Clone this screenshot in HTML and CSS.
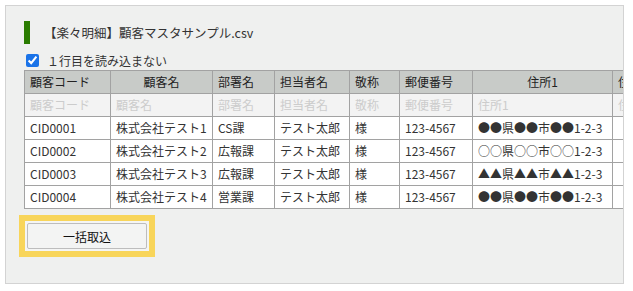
FILE: index.html
```html
<!DOCTYPE html>
<html lang="ja">
<head>
<meta charset="utf-8">
<link rel="stylesheet" href="styles.css">
</head>
<body>
<div class="panel">
  <div class="title">【楽々明細】顧客マスタサンプル.csv</div>
  <label class="skip"><input type="checkbox" checked><span>１行目を読み込まない</span></label>
  <div class="scroll">
    <table class="grid">
      <colgroup>
        <col class="c1"><col class="c2"><col class="c3"><col class="c4"><col class="c5"><col class="c6"><col class="c7"><col class="c8">
      </colgroup>
      <thead>
        <tr class="head">
          <th>顧客コード</th><th class="ctr">顧客名</th><th>部署名</th><th>担当者名</th><th>敬称</th><th>郵便番号</th><th class="ctr">住所1</th><th>住所2</th>
        </tr>
        <tr class="ph">
          <td>顧客コード</td><td>顧客名</td><td>部署名</td><td>担当者名</td><td>敬称</td><td>郵便番号</td><td>住所1</td><td>住所2</td>
        </tr>
      </thead>
      <tbody>
        <tr><td>CID0001</td><td>株式会社テスト1</td><td>CS課</td><td>テスト太郎</td><td>様</td><td>123-4567</td><td>●●県●●市●●1-2-3</td><td></td></tr>
        <tr><td>CID0002</td><td>株式会社テスト2</td><td>広報課</td><td>テスト太郎</td><td>様</td><td>123-4567</td><td>○○県○○市○○1-2-3</td><td></td></tr>
        <tr><td>CID0003</td><td>株式会社テスト3</td><td>広報課</td><td>テスト太郎</td><td>様</td><td>123-4567</td><td>▲▲県▲▲市▲▲1-2-3</td><td></td></tr>
        <tr><td>CID0004</td><td>株式会社テスト4</td><td>営業課</td><td>テスト太郎</td><td>様</td><td>123-4567</td><td>●●県●●市●●1-2-3</td><td></td></tr>
      </tbody>
    </table>
  </div>
  <div class="hilite"><div class="hilite-in"><button class="btn" type="button">一括取込</button></div></div>
</div>
</body>
</html>
```

FILE: styles.css
```css
html, body {
  margin: 0;
  padding: 0;
  background: #ffffff;
}
body {
  font-family: "Noto Sans CJK JP", "Noto Sans", sans-serif;
  font-size: 12px;
  color: #333333;
}
.panel {
  margin: 5px 0 0 5px;
  width: 619px;
  height: 279px;
  border: 1px solid #d3d3d3;
  background: #eff0ef;
  padding: 15px 0 0 18px;
  box-sizing: border-box;
  overflow: hidden;
}
.title {
  border-left: 6px solid #2a7c00;
  height: 23px;
  line-height: 23px;
  padding-left: 14px;
  font-size: 12.5px;
  color: #333333;
}
.skip {
  display: flex;
  align-items: center;
  margin-top: 10px;
  height: 13px;
  line-height: 13px;
  color: #333333;
}
.skip input {
  margin: 0 8px 0 2px;
  width: 13px;
  height: 13px;
  accent-color: #1a73e8;
}
.scroll {
  margin-top: 3px;
  overflow: hidden;
  width: 600px;
}
.grid {
  border-collapse: collapse;
  table-layout: fixed;
  width: 660px;
}
.c1 { width: 86px; }
.c2 { width: 102px; }
.c3 { width: 62px; }
.c4 { width: 75px; }
.c5 { width: 50px; }
.c6 { width: 73px; }
.c7 { width: 140px; }
.c8 { width: 72px; }
.grid th, .grid td {
  border: 1px solid #a2a2a2;
  height: 22px;
  padding: 0 0 0 5px;
  line-height: 22px;
  white-space: nowrap;
  overflow: hidden;
  text-align: left;
  font-weight: normal;
}
.grid .head th {
  background: #c8cbc8;
  color: #222222;
}
.grid .head th.ctr {
  text-align: center;
  padding: 0;
}
.grid .ph td {
  background: #f3f3f3;
  color: #cccccc;
}
.grid tbody td {
  background: #ffffff;
  color: #333333;
}
.hilite {
  margin-top: 6px;
  margin-left: -5px;
  width: 136px;
  box-sizing: border-box;
  background: #f8d55a;
  padding: 6px;
}
.hilite-in {
  background: #f4f5f4;
  padding: 2px;
}
.btn {
  display: block;
  width: 120px;
  height: 26px;
  margin: 0;
  border: 1px solid #bdbdbd;
  border-radius: 2px;
  background: #f3f4f3;
  font-family: "Noto Sans CJK JP", "Noto Sans", sans-serif;
  font-size: 12px;
  color: #111111;
  padding: 0;
}
```
